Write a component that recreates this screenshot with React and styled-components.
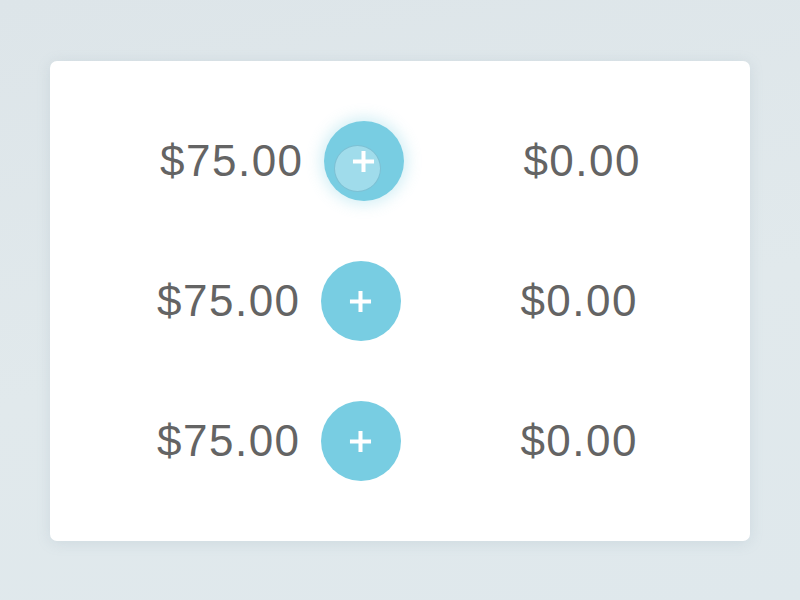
import React from 'react';
import styled, { createGlobalStyle } from 'styled-components';

const ROWS = [
  { id: 1, price: '$75.00', total: '$0.00', active: true },
  { id: 2, price: '$75.00', total: '$0.00', active: false },
  { id: 3, price: '$75.00', total: '$0.00', active: false },
];

export default function App() {
  return (
    <>
      <GlobalStyle />
      <Page>
        <Card>
          {ROWS.map(({ id, price, total, active }) => (
            <Row key={id} $active={active}>
              <ItemGroup>
                <Price>{price}</Price>
                <AddButton $active={active} aria-label="add">
                  {active && <Ripple />}
                  <PlusIcon viewBox="0 0 24 24">
                    <path d="M12 1v22M1 12h22" />
                  </PlusIcon>
                </AddButton>
              </ItemGroup>
              <Total>{total}</Total>
            </Row>
          ))}
        </Card>
      </Page>
    </>
  );
}

const GlobalStyle = createGlobalStyle`
  html, body {
    margin: 0;
    padding: 0;
  }

  body {
    font-family: 'Liberation Sans', Arial, sans-serif;
    background: linear-gradient(170deg, #dde5e9 0%, #e1e9ec 55%, #dfe8ec 100%);
    min-height: 600px;
  }
`;

const Page = styled.div`
  width: 800px;
  height: 600px;
  padding: 61px 0 0 50px;
  box-sizing: border-box;
`;

const Card = styled.div`
  width: 700px;
  height: 480px;
  box-sizing: border-box;
  padding: 30px 112px 30px 107px;
  background: #fff;
  border-radius: 7px;
  box-shadow: 0 2px 14px rgba(120, 150, 165, 0.18);
  display: grid;
  grid-template-rows: repeat(3, 140px);
`;

const Row = styled.div`
  display: flex;
  align-items: center;
  justify-content: space-between;
  transform: translateX(${({ $active }) => ($active ? '3px' : '0')});
`;

const ItemGroup = styled.div`
  display: flex;
  align-items: center;
  gap: 20px;
`;

const Price = styled.span`
  font-size: 44px;
  letter-spacing: 1.5px;
  color: #646464;
  line-height: 1;
`;

const Total = styled(Price)``;

const AddButton = styled.button`
  position: relative;
  width: 80px;
  height: 80px;
  border: none;
  padding: 0;
  border-radius: 50%;
  background: #78cde2;
  display: flex;
  align-items: center;
  justify-content: center;
  box-shadow: ${({ $active }) =>
    $active ? '0 0 14px 4px rgba(120, 205, 226, 0.3)' : 'none'};
  cursor: pointer;
`;

const Ripple = styled.span`
  position: absolute;
  left: 10px;
  top: 24px;
  width: 47px;
  height: 47px;
  border-radius: 50%;
  background: rgba(255, 255, 255, 0.3);
  border: 1.5px solid rgba(90, 165, 190, 0.5);
  box-sizing: border-box;
`;

const PlusIcon = styled.svg`
  position: relative;
  width: 23px;
  height: 23px;
  fill: none;
  stroke: #fff;
  stroke-width: 4.2;
  stroke-linecap: butt;
`;
